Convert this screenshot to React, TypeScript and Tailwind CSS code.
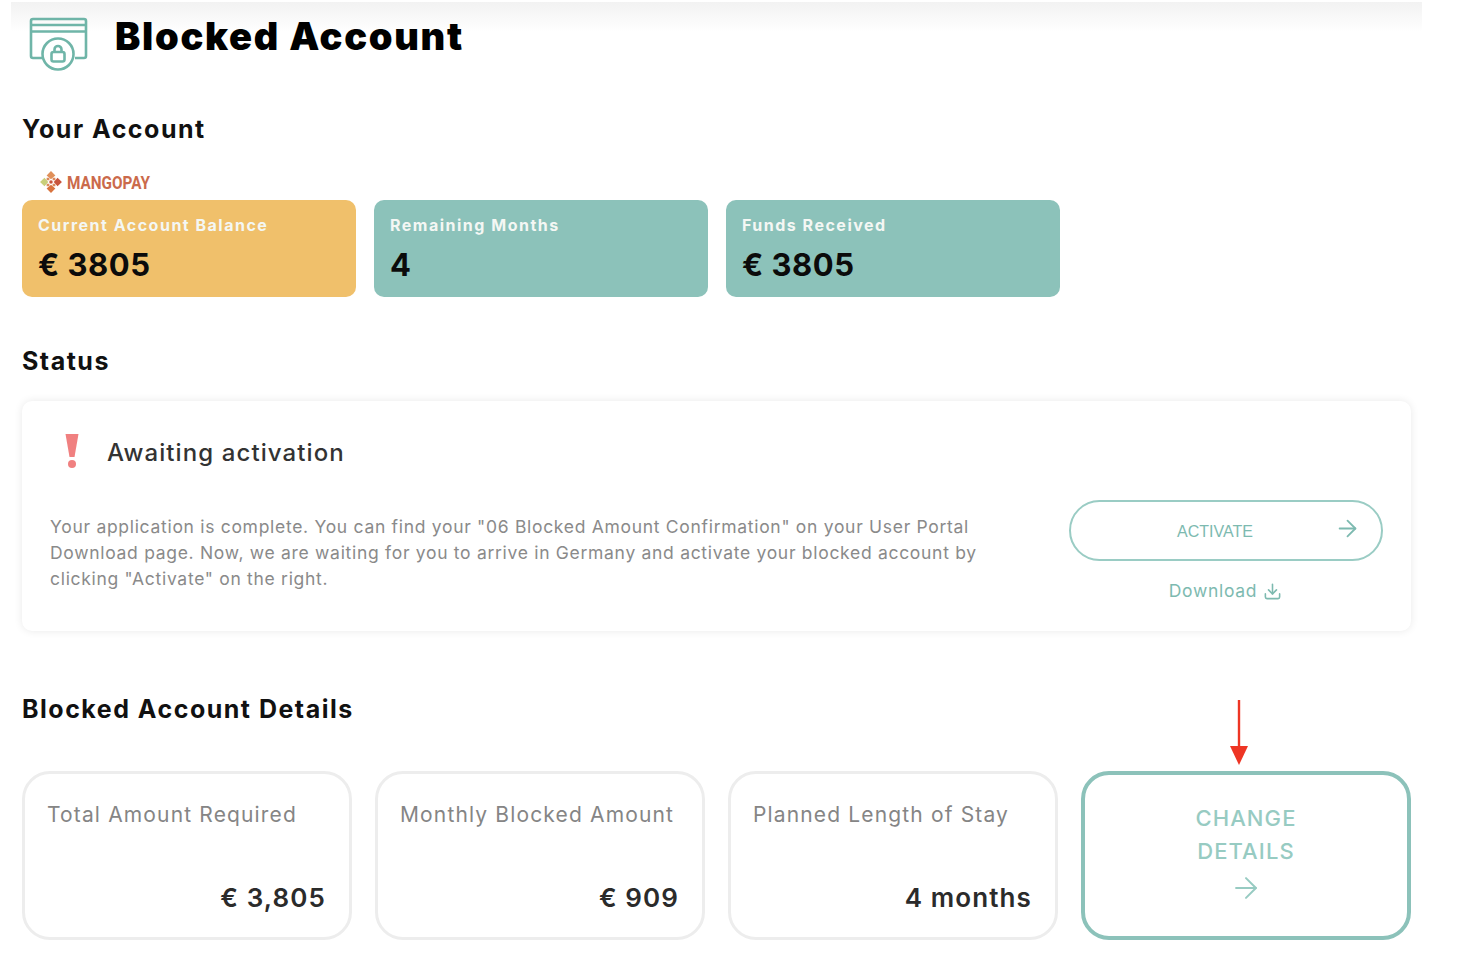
import { ArrowRight, Download } from "lucide-react";

function AccountIcon() {
  return (
    <svg width="60" height="56" viewBox="0 0 60 56" fill="none" stroke="#6fb5a8" strokeWidth="2.6" className="block">
      <path d="M14 42H4a2 2 0 0 1-2-2V5a2 2 0 0 1 2-2h51a2 2 0 0 1 2 2v35a2 2 0 0 1-2 2H46" />
      <path d="M2 9h55M2 15.5h55" />
      <circle cx="29" cy="38" r="15.5" fill="#fff" />
      <rect x="22.5" y="36" width="13" height="9.5" rx="2" />
      <path d="M25.500 36v-2.5a3.5 3.5 0 0 1 7 0V36" />
    </svg>
  );
}

function MangopayLogo() {
  return (
    <div className="flex items-center gap-[4px] h-[22px] ml-[17px]">
      <svg width="24" height="24" viewBox="0 0 22 22">
        <path d="M11 1l4 4-4 3.500-4-3.500z" fill="#e0905a" />
        <path d="M1 11l4-4 3.500 4-3.500 4z" fill="#c9cf7a" />
        <path d="M21 11l-4-4-3.500 4 3.500 4z" fill="#c8553d" />
        <path d="M11 21l4-4-4-3.500-4 3.500z" fill="#d9743f" />
        <path d="M7 7l2.500 0 0 2.500-2.500 0zM12.500 7l2.500 0 0 2.500-2.500 0zM7 12.500l2.500 0 0 2.500-2.500 0zM12.500 12.500l2.500 0 0 2.500-2.500 0z" fill="#dc8a5c" />
        <circle cx="11" cy="11" r="1.6" fill="#c8553d" />
      </svg>
      <span className="font-['Roboto',sans-serif] font-bold text-[18px] text-[#cb6a4b] [transform:scaleX(0.85)] origin-left">
        MANGOPAY
      </span>
    </div>
  );
}

function StatCard({ label, value, color }: { label: string; value: string; color: string }) {
  return (
    <div className={`w-[334px] h-[97px] rounded-[10px] pl-[16px] pt-[15px] ${color}`}>
      <div className="text-[16px] leading-[20px] font-bold tracking-[1.5px] text-[#f4f7f4]">{label}</div>
      <div className="mt-[11px] text-[31px] leading-[38px] font-bold tracking-[0.5px] text-[#0b0b0b]">{value}</div>
    </div>
  );
}

function DetailCard({ label, value }: { label: string; value: string }) {
  return (
    <div className="w-[330px] h-[169px] rounded-[28px] border-[3px] border-[#ededed] pt-[26px] pl-[22px] pr-[23px] pb-[23px] flex flex-col justify-between">
      <div className="text-[21px] leading-[30px] tracking-[1.15px] text-[#858585]">{label}</div>
      <div className="text-right text-[26px] leading-[32px] font-semibold tracking-[1.1px] text-[#2b2b2b]">{value}</div>
    </div>
  );
}

function SectionTitle({ children }: { children: string }) {
  return <h2 className="text-[25px] leading-[32px] font-bold tracking-[1.5px] text-[#111]">{children}</h2>;
}

export default function App() {
  return (
    <div className="w-[1458px] h-[964px] overflow-hidden bg-white font-['Inter',sans-serif] pl-[22px] relative">
      <header className="-ml-[11px] mt-[2px] w-[1411px] h-[50px] pl-[18px] flex items-start bg-gradient-to-b from-[#f2f2f2] to-white to-60%">
        <div className="mt-[14px]">
          <AccountIcon />
        </div>
        <h1 className="ml-[26px] mt-[9px] text-[38px] leading-[50px] font-black tracking-[1.7px] text-black">
          Blocked Account
        </h1>
      </header>

      <div className="mt-[61px]">
        <SectionTitle>Your Account</SectionTitle>
      </div>
      <div className="mt-[26px]">
        <MangopayLogo />
      </div>
      <div className="mt-[7px] flex gap-[18px]">
        <StatCard label="Current Account Balance" value="€ 3805" color="bg-[#f0c06b]" />
        <StatCard label="Remaining Months" value="4" color="bg-[#8cc2ba]" />
        <StatCard label="Funds Received" value="€ 3805" color="bg-[#8cc2ba]" />
      </div>

      <div className="mt-[48px]">
        <SectionTitle>Status</SectionTitle>
      </div>
      <section className="mt-[24px] w-[1389px] h-[230px] rounded-[10px] bg-white shadow-[0_0_8px_rgba(0,0,0,0.09)] pl-[28px] pr-[28px] pt-[30px]">
        <div className="flex items-center h-[44px]">
          <svg width="16" height="36" viewBox="0 0 16 36" className="ml-[14px] -mt-[5px]">
            <path d="M1.500 1h13L10.500 24h-5z" fill="#f08080" />
            <circle cx="8" cy="31" r="4" fill="#f08080" />
          </svg>
          <div className="ml-[27px] text-[24px] leading-[32px] font-medium tracking-[1.1px] text-[#333]">
            Awaiting activation
          </div>
        </div>
        <div className="mt-[25px] flex items-start justify-between">
          <p className="w-[960px] pt-[14px] text-[17.500px] leading-[26px] tracking-[0.7px] text-[#8a8a8a]">
            Your application is complete. You can find your "06 Blocked Amount Confirmation" on your User Portal Download page. Now, we are waiting for you to arrive in Germany and activate your blocked account by clicking "Activate" on the right.
          </p>
          <div className="w-[314px] flex flex-col items-center">
            <button className="relative w-[314px] h-[61px] rounded-full border-2 border-[#9accc4] pt-[3px] text-[16px] font-['Liberation_Sans',sans-serif] text-[#7dbab0] pr-[22px]">
              ACTIVATE
              <ArrowRight className="absolute right-[20px] top-[13px] w-[27px] h-[27px] text-[#7dbab0]" strokeWidth={1.6} />
            </button>
            <div className="mt-[18px] ml-[-1px] flex items-center gap-[6px] text-[17.500px] leading-[24px] tracking-[0.7px] text-[#7dbab0]">
              Download
              <Download className="w-[19px] h-[19px]" strokeWidth={2} />
            </div>
          </div>
        </div>
      </section>

      <div className="mt-[62px]">
        <SectionTitle>Blocked Account Details</SectionTitle>
      </div>
      <div className="mt-[46px] flex gap-[23px]">
        <DetailCard label="Total Amount Required" value="€ 3,805" />
        <DetailCard label="Monthly Blocked Amount" value="€ 909" />
        <DetailCard label="Planned Length of Stay" value="4 months" />
        <div className="relative w-[330px] h-[169px] rounded-[28px] border-[4px] border-[#8cc2ba] flex flex-col items-center pt-[27px]">
          <div className="text-[22px] leading-[33px] font-medium tracking-[1.1px] text-center text-[#97cbc2]">
            CHANGE
            <br />
            DETAILS
          </div>
          <ArrowRight className="mt-[3px] w-[34px] h-[34px] text-[#97cbc2]" strokeWidth={1.4} />
          {/* red annotation arrow */}
          <svg width="20" height="66" viewBox="0 0 20 66" className="absolute -top-[75px] left-[144px]">
            <path d="M10 0v48" stroke="#ee3524" strokeWidth="2.4" />
            <path d="M1 46h18l-9 19z" fill="#ee3524" />
          </svg>
        </div>
      </div>
    </div>
  );
}
